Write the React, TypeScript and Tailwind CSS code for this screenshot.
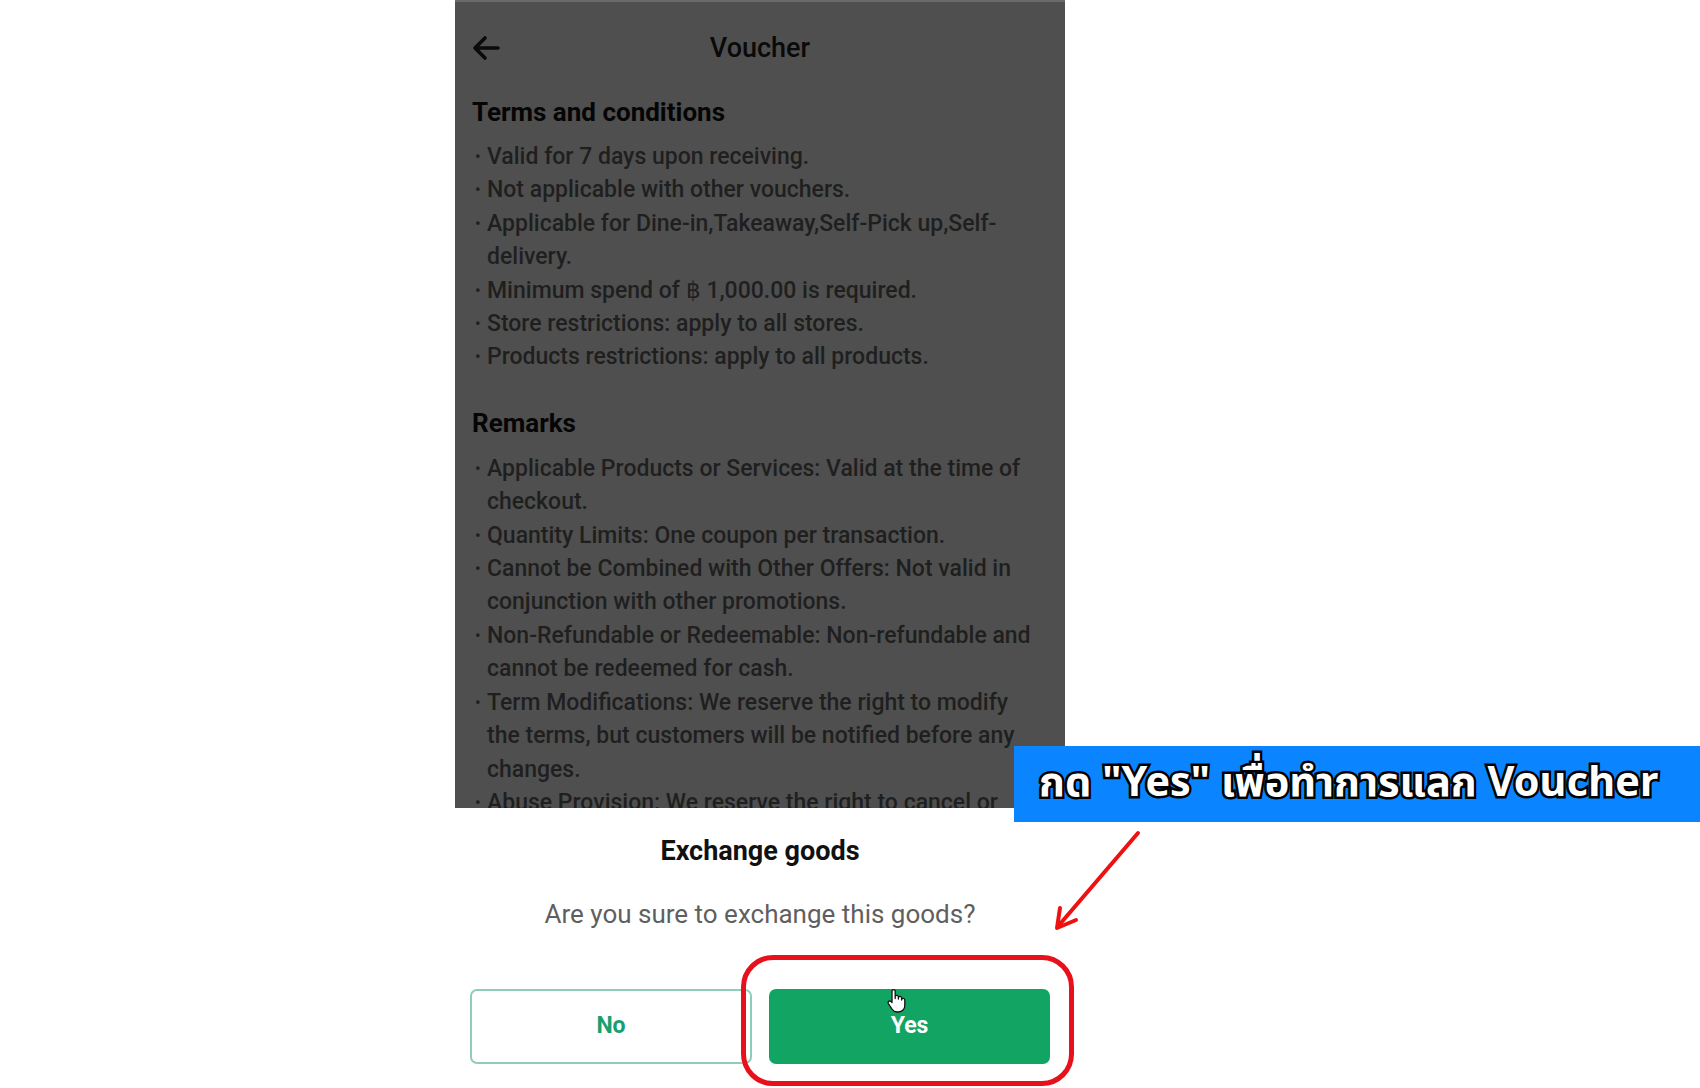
import React from "react";

const terms: string[][] = [
    ["Valid for 7 days upon receiving."],
    ["Not applicable with other vouchers."],
    ["Applicable for Dine-in,Takeaway,Self-Pick up,Self-", "delivery."],
    ["Minimum spend of ฿ 1,000.00 is required."],
    ["Store restrictions: apply to all stores."],
    ["Products restrictions: apply to all products."],
];

const remarks: string[][] = [
    ["Applicable Products or Services: Valid at the time of", "checkout."],
    ["Quantity Limits: One coupon per transaction."],
    ["Cannot be Combined with Other Offers: Not valid in", "conjunction with other promotions."],
    ["Non-Refundable or Redeemable: Non-refundable and", "cannot be redeemed for cash."],
    ["Term Modifications: We reserve the right to modify", "the terms, but customers will be notified before any", "changes."],
    ["Abuse Provision: We reserve the right to cancel or"],
];

const BulletList = ({ items }: { items: string[][] }) => (
    <ul className="text-[23px] leading-[33.4px] font-medium text-[#1f1f1f]">
        {items.map((lines, i) => (
            <li key={i} className="flex">
                <span className="w-[15px] shrink-0 pl-[3px] text-[16px]">•</span>
                <span className="whitespace-nowrap">
                    {lines.map((l, j) => (
                        <span key={j} className="block">
                            {l}
                        </span>
                    ))}
                </span>
            </li>
        ))}
    </ul>
);

const HandCursor = () => (
    <svg width="22" height="26" viewBox="0 0 22 26" fill="none">
        <path
            d="M6 12V3.2a1.6 1.6 0 0 1 3.2 0V10.5V9a1.6 1.6 0 0 1 3.2 0v2V10a1.6 1.6 0 0 1 3.2 0v2a1.6 1.6 0 0 1 3.2 0v5.5c0 3.5-2.5 6.5-6.5 6.5H11c-2.4 0-3.7-1-5-2.8L2.3 15.5a1.7 1.7 0 0 1 2.6-2.1L6 14.5Z"
            fill="#fff"
            stroke="#111"
            strokeWidth="1.3"
            strokeLinejoin="round"
        />
    </svg>
);

export default function App() {
    return (
        <div className="relative w-[1700px] h-[1088px] bg-white overflow-hidden font-['Roboto',sans-serif]">
            {/* Phone screen */}
            <div className="ml-[455px] w-[610px] h-full flex flex-col">
                {/* Dimmed page behind dialog */}
                <div className="h-[808px] bg-[#4f4f4f] border-t-[2px] border-[#6a6a6a] overflow-hidden px-[17px]">
                    <div className="relative h-[92px] flex items-center justify-center">
                        <svg className="absolute left-0 top-[33px]" width="28" height="26" viewBox="0 0 28 26" fill="none">
                            <path d="M26 13H4M13 3L3 13l10 10" stroke="#0a0a0a" strokeWidth="3.6" strokeLinecap="round" strokeLinejoin="round" />
                        </svg>
                        <span className="text-[27px] font-medium text-[#0a0a0a]">Voucher</span>
                    </div>
                    <h2 className="mt-[2px] text-[26px] leading-[33px] font-bold text-[#050505]">Terms and conditions</h2>
                    <div className="mt-[11px]">
                        <BulletList items={terms} />
                    </div>
                    <h2 className="mt-[33px] text-[26px] leading-[33px] font-bold text-[#050505]">Remarks</h2>
                    <div className="mt-[12px]">
                        <BulletList items={remarks} />
                    </div>
                </div>

                {/* Dialog */}
                <div className="flex-1 bg-white flex flex-col items-center">
                    <h3 className="mt-[27px] text-[27px] leading-[32px] font-bold text-[#111]">Exchange goods</h3>
                    <p className="mt-[30px] text-[26px] leading-[34px] text-[#5f5f5f]">Are you sure to exchange this goods?</p>
                    <div className="mt-[58px] w-full px-[15px] flex gap-[17px]">
                        <button className="w-[282px] h-[75px] rounded-[7px] border-2 border-[#8fcdb8] bg-white text-[23px] font-bold text-[#17a06e]">
                            No
                        </button>
                        <button className="w-[281px] h-[75px] rounded-[7px] bg-[#12a463] text-[23px] font-bold text-white">
                            Yes
                        </button>
                    </div>
                </div>
            </div>

            {/* Annotation: banner */}
            <div className="absolute left-[1014px] top-[746px] w-[686px] h-[76px] bg-[#0a84ff] flex items-center pl-[25px]">
                <span className="text-[41.5px] leading-none font-bold text-white [-webkit-text-stroke:5px_#000] [paint-order:stroke_fill] font-['Noto_Sans_Thai','Noto_Sans','DejaVu_Sans',sans-serif]">
                    กด "Yes" เพื่อทำการแลก Voucher
                </span>
            </div>

            {/* Annotation: arrow */}
            <svg className="absolute left-[1040px] top-[820px]" width="110" height="120" viewBox="0 0 110 120" fill="none">
                <path d="M98 13L20 104" stroke="#ee1111" strokeWidth="4" strokeLinecap="round" />
                <path d="M17 108l3-20M17 108l19-8" stroke="#ee1111" strokeWidth="4" strokeLinecap="round" />
            </svg>

            {/* Annotation: highlight ring */}
            <div className="absolute left-[741px] top-[955px] w-[333px] h-[131px] rounded-[32px] border-[5px] border-[#e8101a]" />

            {/* Cursor */}
            <div className="absolute left-[886px] top-[988px]">
                <HandCursor />
            </div>
        </div>
    );
}
